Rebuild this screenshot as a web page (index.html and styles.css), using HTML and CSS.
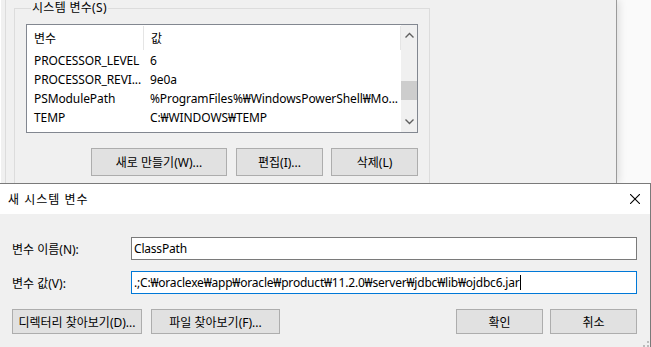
FILE: index.html
```html
<!DOCTYPE html>
<html lang="ko">
<head>
<meta charset="UTF-8" />
<title>새 시스템 변수</title>
<link rel="stylesheet" href="styles.css">
</head>
<body>
<div class="desktop">
  <!-- 뒤쪽 환경 변수 창 -->
  <div class="env-window">
    <fieldset class="group">
      <legend>시스템 변수(S)</legend>
      <div class="list">
        <div class="list-body">
          <div class="list-head">
            <div class="col-name">변수</div>
            <div class="col-value">값</div>
          </div>
          <div class="list-row"><div class="col-name">PROCESSOR_LEVEL</div><div class="col-value">6</div></div>
          <div class="list-row"><div class="col-name">PROCESSOR_REVI...</div><div class="col-value">9e0a</div></div>
          <div class="list-row"><div class="col-name">PSModulePath</div><div class="col-value">%ProgramFiles%₩WindowsPowerShell₩Mo...</div></div>
          <div class="list-row"><div class="col-name">TEMP</div><div class="col-value">C:₩WINDOWS₩TEMP</div></div>
        </div>
        <div class="scrollbar">
          <svg class="arrow" viewBox="0 0 9 6" width="9" height="6"><path d="M0.5 5.5 L4.5 1.5 L8.5 5.5" fill="none" stroke="#606060" stroke-width="1.4"/></svg>
          <div class="track"><div class="thumb"></div></div>
          <svg class="arrow" viewBox="0 0 9 6" width="9" height="6"><path d="M0.5 0.5 L4.5 4.5 L8.5 0.5" fill="none" stroke="#606060" stroke-width="1.4"/></svg>
        </div>
      </div>
      <div class="group-buttons">
        <button class="btn btn-new">새로 만들기(W)...</button>
        <button class="btn btn-small">편집(I)...</button>
        <button class="btn btn-small">삭제(L)</button>
      </div>
    </fieldset>
  </div>

  <!-- 새 시스템 변수 대화상자 -->
  <div class="dialog">
    <div class="titlebar">
      <span class="title">새 시스템 변수</span>
      <svg class="close" viewBox="0 0 10 10" width="10" height="10"><path d="M0 0 L10 10 M10 0 L0 10" stroke="#000" stroke-width="1.1"/></svg>
    </div>
    <div class="dialog-body">
      <div class="field">
        <label>변수 이름(N):</label>
        <div class="input">ClassPath</div>
      </div>
      <div class="field">
        <label>변수 값(V):</label>
        <div class="input focused">.;C:₩oraclexe₩app₩oracle₩product₩11.2.0₩server₩jdbc₩lib₩ojdbc6.jar<span class="caret"></span></div>
      </div>
      <div class="dialog-buttons">
        <button class="btn btn-dir">디렉터리 찾아보기(D)...</button>
        <button class="btn btn-file">파일 찾아보기(F)...</button>
        <div class="spacer"></div>
        <button class="btn btn-small">확인</button>
        <button class="btn btn-small">취소</button>
      </div>
    </div>
    <svg class="grip" viewBox="0 0 10 10" width="10" height="10">
      <rect x="8" y="0" width="2" height="2" fill="#bcbcbc"/>
      <rect x="4" y="4" width="2" height="2" fill="#bcbcbc"/>
      <rect x="8" y="4" width="2" height="2" fill="#bcbcbc"/>
      <rect x="0" y="8" width="2" height="2" fill="#bcbcbc"/>
      <rect x="4" y="8" width="2" height="2" fill="#bcbcbc"/>
      <rect x="8" y="8" width="2" height="2" fill="#bcbcbc"/>
    </svg>
  </div>
</div>
</body>
</html>
```

FILE: styles.css
```css
body {
  margin: 0;
  background: #fafafa;
  font-family: 'Noto Sans', 'Noto Sans CJK KR', sans-serif;
  font-size: 12px;
  color: #000;
}
.desktop {
  position: relative;
  width: 651px;
  height: 347px;
  overflow: hidden;
}
.env-window {
  position: absolute;
  left: 0;
  top: 0;
  width: 617px;
  height: 183px;
  background: #f0f0f0;
  border-right: 1px solid #9a9a9a;
  box-shadow: 2px 0 8px rgba(0, 0, 0, 0.12);
  border-left: 1px solid #fff;
  box-sizing: border-box;
  padding: 0 0 0 4px;
}
.env-window::before {
  content: '';
  position: absolute;
  left: 4px;
  top: 0;
  bottom: 0;
  border-left: 1px solid #dcdcdc;
}
.group {
  margin: 1px 0 0 9px;
  width: 416px;
  height: 220px;
  box-sizing: border-box;
  border: 1px solid #dcdcdc;
  padding: 0 11px;
}
.group legend {
  padding: 0 1px;
  margin-left: 5px;
  line-height: 14px;
  letter-spacing: 0.3px;
}
.list {
  display: flex;
  margin-top: 9px;
  height: 109px;
  border: 1px solid #828790;
  background: #fff;
  box-sizing: border-box;
}
.list-body {
  flex: 1;
  letter-spacing: -0.1px;
}
.list-head {
  display: flex;
  height: 25px;
  align-items: center;
  margin-bottom: 1px;
}
.list-head .col-name {
  border-right: 1px solid #e5e5e5;
  height: 24px;
  line-height: 25px;
}
.list-head .col-value {
  flex: 1;
  border-right: 1px solid #e5e5e5;
  height: 24px;
  line-height: 25px;
}
.list-row {
  display: flex;
  height: 19px;
  line-height: 19px;
}
.col-name {
  width: 109px;
  padding-left: 7px;
  flex-shrink: 0;
}
.col-value {
  padding-left: 7px;
  white-space: nowrap;
}
.scrollbar {
  width: 16px;
  background: #f0f0f0;
  display: flex;
  flex-direction: column;
  align-items: center;
}
.arrow {
  margin: 7px 0;
}
.track {
  flex: 1;
  width: 100%;
}
.thumb {
  margin-top: 36px;
  height: 19px;
  background: #cdcdcd;
}
.group-buttons {
  display: flex;
  justify-content: flex-end;
  gap: 8px;
  margin-top: 15px;
}
.btn {
  font: inherit;
  height: 28px;
  background: #e1e1e1;
  border: 1px solid #adadad;
  padding: 0;
  color: #000;
}
.btn-new {
  width: 136px;
  margin-right: 1px;
}
.btn-small {
  width: 87px;
}
.dialog {
  position: absolute;
  left: -1px;
  top: 183px;
  width: 652px;
  height: 170px;
  background: #f0f0f0;
  border: 1px solid #7a7a7a;
  box-sizing: border-box;
}
.titlebar {
  height: 30px;
  background: #fff;
  display: flex;
  align-items: center;
  justify-content: space-between;
  padding: 0 10px 0 8px;
}
.title {
  letter-spacing: 1px;
}
.close {
  margin-top: -1px;
}
.dialog-body {
  padding: 23px 13px 0 12px;
}
.field {
  display: flex;
  align-items: center;
  margin-bottom: 11px;
}
.field label {
  width: 119px;
}
.input {
  flex: 1;
  height: 23px;
  line-height: 21px;
  box-sizing: border-box;
  border: 1px solid #7a7a7a;
  background: #fff;
  padding-left: 2px;
  white-space: nowrap;
  letter-spacing: -0.2px;
}
.input.focused {
  border-color: #0078d7;
}
.caret {
  display: inline-block;
  width: 1px;
  height: 15px;
  background: #000;
  vertical-align: -3px;
}
.dialog-buttons {
  display: flex;
  gap: 7px;
  margin-top: 15px;
}
.dialog-buttons .btn {
  height: 25px;
}
.btn-dir {
  width: 130px;
  margin-right: 2px;
}
.btn-file {
  width: 129px;
}
.spacer {
  flex: 1;
}
.grip {
  position: absolute;
  right: 1px;
  bottom: 1px;
}
```
